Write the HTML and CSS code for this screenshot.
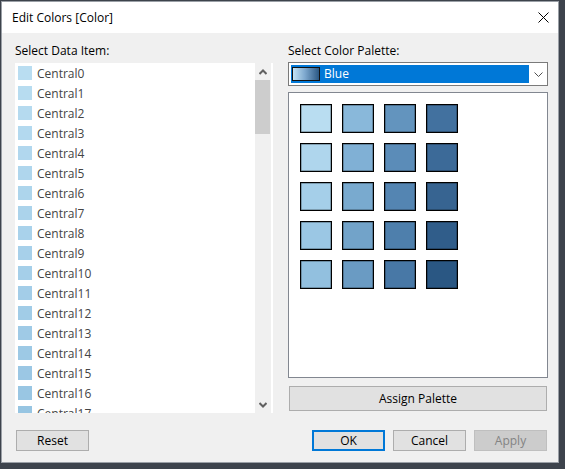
FILE: index.html
```html
<!DOCTYPE html>
<html>
<head>
<meta charset="utf-8">
<title>Edit Colors [Color]</title>
<link rel="stylesheet" href="styles.css">
</head>
<body>
<div class="window">
  <div class="titlebar">
    <span class="title">Edit Colors [Color]</span>
    <svg class="close" width="11" height="11" viewBox="0 0 11 11"><path d="M0.5 0.5 L10.5 10.5 M10.5 0.5 L0.5 10.5" stroke="#000" stroke-width="1" fill="none"/></svg>
  </div>
  <div class="content">
    <div class="columns">
      <div class="col-left">
        <div class="label">Select Data Item:</div>
        <div class="listbox">
          <div class="items">
            <div class="item"><span class="sw" style="background:#b9ddf1"></span><span class="item-text">Central0</span></div>
            <div class="item"><span class="sw" style="background:#b7dcf0"></span><span class="item-text">Central1</span></div>
            <div class="item"><span class="sw" style="background:#b5daef"></span><span class="item-text">Central2</span></div>
            <div class="item"><span class="sw" style="background:#b3d9ef"></span><span class="item-text">Central3</span></div>
            <div class="item"><span class="sw" style="background:#b1d7ee"></span><span class="item-text">Central4</span></div>
            <div class="item"><span class="sw" style="background:#afd6ed"></span><span class="item-text">Central5</span></div>
            <div class="item"><span class="sw" style="background:#add5ec"></span><span class="item-text">Central6</span></div>
            <div class="item"><span class="sw" style="background:#abd3eb"></span><span class="item-text">Central7</span></div>
            <div class="item"><span class="sw" style="background:#a9d2eb"></span><span class="item-text">Central8</span></div>
            <div class="item"><span class="sw" style="background:#a7d0ea"></span><span class="item-text">Central9</span></div>
            <div class="item"><span class="sw" style="background:#a5cfe9"></span><span class="item-text">Central10</span></div>
            <div class="item"><span class="sw" style="background:#a3cde8"></span><span class="item-text">Central11</span></div>
            <div class="item"><span class="sw" style="background:#a1cce7"></span><span class="item-text">Central12</span></div>
            <div class="item"><span class="sw" style="background:#9fcae6"></span><span class="item-text">Central13</span></div>
            <div class="item"><span class="sw" style="background:#9dc9e5"></span><span class="item-text">Central14</span></div>
            <div class="item"><span class="sw" style="background:#9bc7e4"></span><span class="item-text">Central15</span></div>
            <div class="item"><span class="sw" style="background:#99c6e3"></span><span class="item-text">Central16</span></div>
            <div class="item"><span class="sw" style="background:#97c5e2"></span><span class="item-text">Central17</span></div>
          </div>
          <div class="vscroll">
            <div class="arrow"><svg width="8" height="6" viewBox="0 0 8 6"><polyline points="0.5,5 4,1.5 7.5,5" fill="none" stroke="#606060" stroke-width="2"/></svg></div>
            <div class="track"><div class="thumb"></div></div>
            <div class="arrow"><svg width="8" height="6" viewBox="0 0 8 6"><polyline points="0.5,1 4,4.5 7.5,1" fill="none" stroke="#606060" stroke-width="2"/></svg></div>
          </div>
        </div>
      </div>
      <div class="col-right">
        <div class="label">Select Color Palette:</div>
        <div class="combo">
          <div class="selected">
            <span class="grad"></span>
            <span class="combo-text">Blue</span>
          </div>
          <div class="drop">
            <svg width="9" height="5" viewBox="0 0 9 5"><polyline points="0.5,0.5 4.5,4.5 8.5,0.5" fill="none" stroke="#505050" stroke-width="1"/></svg>
          </div>
        </div>
        <div class="palette">
          <div class="grid">
            <span class="cell" style="background:#b9ddf1"></span>
            <span class="cell" style="background:#89b8da"></span>
            <span class="cell" style="background:#6394be"></span>
            <span class="cell" style="background:#42719f"></span>
            <span class="cell" style="background:#afd6ed"></span>
            <span class="cell" style="background:#80b0d5"></span>
            <span class="cell" style="background:#5b8cb8"></span>
            <span class="cell" style="background:#3c6a98"></span>
            <span class="cell" style="background:#a5cfe9"></span>
            <span class="cell" style="background:#79aacf"></span>
            <span class="cell" style="background:#5485b2"></span>
            <span class="cell" style="background:#376491"></span>
            <span class="cell" style="background:#9bc7e4"></span>
            <span class="cell" style="background:#72a3c9"></span>
            <span class="cell" style="background:#4e7fac"></span>
            <span class="cell" style="background:#305d8a"></span>
            <span class="cell" style="background:#92c0df"></span>
            <span class="cell" style="background:#6a9bc3"></span>
            <span class="cell" style="background:#4878a6"></span>
            <span class="cell" style="background:#2a5783"></span>
          </div>
        </div>
        <div class="btn assign">Assign Palette</div>
      </div>
    </div>
    <div class="footer">
      <div class="btn small">Reset</div>
      <div class="right-btns">
        <div class="btn small default">OK</div>
        <div class="btn small">Cancel</div>
        <div class="btn small disabled">Apply</div>
      </div>
    </div>
  </div>
</div>
</body>
</html>
```
FILE: styles.css
```css
* { box-sizing: border-box; }
html, body { margin: 0; padding: 0; }
body {
  background: #3d434c;
  width: 565px;
  height: 469px;
  overflow: hidden;
  font-family: "Open Sans", "Noto Sans", sans-serif;
  font-size: 12px;
  color: #000;
}
.window {
  margin: 1px 0 0 1px;
  width: 558px;
  height: 462px;
  border: 1px solid #9a9fa6;
  background: #f0f0f0;
}
.titlebar {
  height: 31px;
  background: #fff;
  display: flex;
  align-items: center;
  justify-content: space-between;
  padding: 1px 9px 0 10px;
}
.title { font-size: 12px; line-height: 16px; }
.close { display: block; margin-top: -1px; }
.content { padding: 10px 10px 0 13px; }
.columns {
  display: grid;
  grid-template-columns: 258px 260px;
  column-gap: 15px;
  height: 370px;
}
.label { height: 16px; line-height: 16px; white-space: nowrap; }
.listbox {
  margin-top: 4px;
  height: 350px;
  display: flex;
  background: #fff;
  padding-right: 2px;
}
.items { flex: 1; overflow: hidden; }
.item {
  height: 20px;
  display: flex;
  align-items: flex-start;
  padding-left: 3px;
  color: #444;
  white-space: nowrap;
}
.sw { width: 14px; height: 14px; margin: 3px 5px 0 0; flex: none; }
.item-text { line-height: 20px; padding-top: 1px; }
.vscroll {
  width: 16px;
  display: flex;
  flex-direction: column;
  background: #f0f0f0;
}
.arrow {
  height: 17px;
  display: flex;
  align-items: center;
  justify-content: center;
}
.arrow svg { display: block; }
.track { flex: 1; }
.thumb { width: 15px; height: 54px; background: #cdcdcd; }
.combo {
  margin-top: 3px;
  height: 24px;
  border: 1px solid #7a7a7a;
  background: #fff;
  display: flex;
  padding: 2px 0 2px 2px;
}
.selected {
  flex: 1;
  background: #0078d7;
  display: flex;
  align-items: center;
  color: #fff;
}
.grad {
  margin-left: 1px;
  width: 28px;
  height: 14px;
  border: 1px solid #111;
  background: linear-gradient(to right, #c4e3f4, #7fa9cf 45%, #2a5783);
}
.combo-text { margin-left: 4px; line-height: 16px; }
.drop {
  width: 18px;
  display: flex;
  align-items: center;
  justify-content: center;
}
.drop svg { display: block; }
.palette {
  margin-top: 6px;
  height: 286px;
  border: 1px solid #828790;
  background: #fff;
  padding: 11px;
}
.grid {
  display: grid;
  grid-template-columns: repeat(4, 32px);
  grid-auto-rows: 29px;
  gap: 10px;
}
.cell {
  display: block;
  border: 1px solid #000;
  box-shadow: inset 0 0 0 0.5px rgba(0,0,0,0.5);
}
.btn {
  display: flex;
  align-items: center;
  justify-content: center;
  background: #e1e1e1;
  border: 1px solid #adadad;
  white-space: nowrap;
  line-height: 16px;
}
.assign { margin: 8px 1px 0; height: 25px; }
.footer {
  margin-top: 17px;
  display: flex;
  justify-content: space-between;
  padding: 0 1px;
}
.right-btns { display: flex; gap: 8px; }
.small { width: 73px; height: 21px; }
.default { border: 2px solid #0078d7; }
.disabled { background: #cccccc; border-color: #bfbfbf; color: #838383; }
```
